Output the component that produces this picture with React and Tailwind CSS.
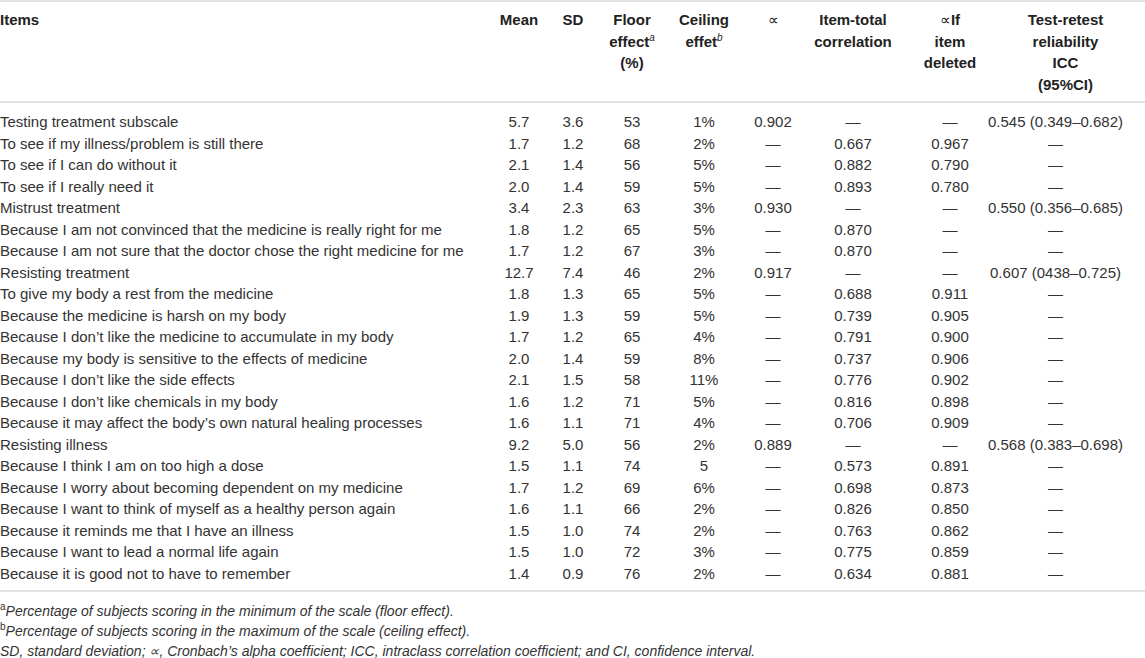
import React from 'react';

const rows = [
  ['Testing treatment subscale', '5.7', '3.6', '53', '1%', '0.902', '—', '—', '0.545 (0.349–0.682)'],
  ['To see if my illness/problem is still there', '1.7', '1.2', '68', '2%', '—', '0.667', '0.967', '—'],
  ['To see if I can do without it', '2.1', '1.4', '56', '5%', '—', '0.882', '0.790', '—'],
  ['To see if I really need it', '2.0', '1.4', '59', '5%', '—', '0.893', '0.780', '—'],
  ['Mistrust treatment', '3.4', '2.3', '63', '3%', '0.930', '—', '—', '0.550 (0.356–0.685)'],
  ['Because I am not convinced that the medicine is really right for me', '1.8', '1.2', '65', '5%', '—', '0.870', '—', '—'],
  ['Because I am not sure that the doctor chose the right medicine for me', '1.7', '1.2', '67', '3%', '—', '0.870', '—', '—'],
  ['Resisting treatment', '12.7', '7.4', '46', '2%', '0.917', '—', '—', '0.607 (0438–0.725)'],
  ['To give my body a rest from the medicine', '1.8', '1.3', '65', '5%', '—', '0.688', '0.911', '—'],
  ['Because the medicine is harsh on my body', '1.9', '1.3', '59', '5%', '—', '0.739', '0.905', '—'],
  ['Because I don’t like the medicine to accumulate in my body', '1.7', '1.2', '65', '4%', '—', '0.791', '0.900', '—'],
  ['Because my body is sensitive to the effects of medicine', '2.0', '1.4', '59', '8%', '—', '0.737', '0.906', '—'],
  ['Because I don’t like the side effects', '2.1', '1.5', '58', '11%', '—', '0.776', '0.902', '—'],
  ['Because I don’t like chemicals in my body', '1.6', '1.2', '71', '5%', '—', '0.816', '0.898', '—'],
  ['Because it may affect the body’s own natural healing processes', '1.6', '1.1', '71', '4%', '—', '0.706', '0.909', '—'],
  ['Resisting illness', '9.2', '5.0', '56', '2%', '0.889', '—', '—', '0.568 (0.383–0.698)'],
  ['Because I think I am on too high a dose', '1.5', '1.1', '74', '5', '—', '0.573', '0.891', '—'],
  ['Because I worry about becoming dependent on my medicine', '1.7', '1.2', '69', '6%', '—', '0.698', '0.873', '—'],
  ['Because I want to think of myself as a healthy person again', '1.6', '1.1', '66', '2%', '—', '0.826', '0.850', '—'],
  ['Because it reminds me that I have an illness', '1.5', '1.0', '74', '2%', '—', '0.763', '0.862', '—'],
  ['Because I want to lead a normal life again', '1.5', '1.0', '72', '3%', '—', '0.775', '0.859', '—'],
  ['Because it is good not to have to remember', '1.4', '0.9', '76', '2%', '—', '0.634', '0.881', '—'],
];

const cols = 'grid grid-cols-[488px_62px_46px_72px_72px_66px_94px_100px_145px]';

function Sup({ children, italic }) {
  return (
    <span className={`relative -top-[6px] text-[10px] leading-none ${italic ? 'italic font-normal' : 'not-italic'}`}>
      {children}
    </span>
  );
}

function App() {
  return (
    <div className="w-[1145px] bg-white text-[#333] font-['Liberation_Sans',Arial,sans-serif]">
      {/* Header */}
      <div className={`${cols} border-t-2 border-b-2 border-[#e2e2e2] pt-[7px] pb-[6px] text-[15px] leading-[21.5px] font-bold text-[#222]`}>
        <div>Items</div>
        <div className="text-center">Mean</div>
        <div className="text-center">SD</div>
        <div className="text-center">
          Floor<br />effect<Sup italic>a</Sup><br />(%)
        </div>
        <div className="text-center">
          Ceiling<br />effet<Sup italic>b</Sup>
        </div>
        <div className="text-center font-normal">∝</div>
        <div className="text-center whitespace-nowrap">Item-total<br />correlation</div>
        <div className="text-center">
          <span className="font-normal">∝</span>If<br />item<br />deleted
        </div>
        <div className="text-center pr-[14px]">Test-retest<br />reliability<br />ICC<br />(95%CI)</div>
      </div>

      {/* Body */}
      <div className="border-b-2 border-[#e2e2e2] pt-[8px] pb-[6px] text-[15px] leading-[21.5px]">
        {rows.map((r, i) => (
          <div key={i} className={cols}>
            <div className="whitespace-nowrap">{r[0]}</div>
            {r.slice(1, 8).map((v, j) => (
              <div key={j} className="text-center whitespace-nowrap">{v}</div>
            ))}
            <div className="flex justify-center whitespace-nowrap pr-[34px]">
              <span>{r[8]}</span>
            </div>
          </div>
        ))}
      </div>

      {/* Footnotes */}
      <div className="pt-[9px] text-[14px] leading-[20px] italic text-[#333]">
        <div><Sup>a</Sup>Percentage of subjects scoring in the minimum of the scale (floor effect).</div>
        <div><Sup>b</Sup>Percentage of subjects scoring in the maximum of the scale (ceiling effect).</div>
        <div>SD, standard deviation; ∝, Cronbach’s alpha coefficient; ICC, intraclass correlation coefficient; and CI, confidence interval.</div>
      </div>
    </div>
  );
}

export default App;
